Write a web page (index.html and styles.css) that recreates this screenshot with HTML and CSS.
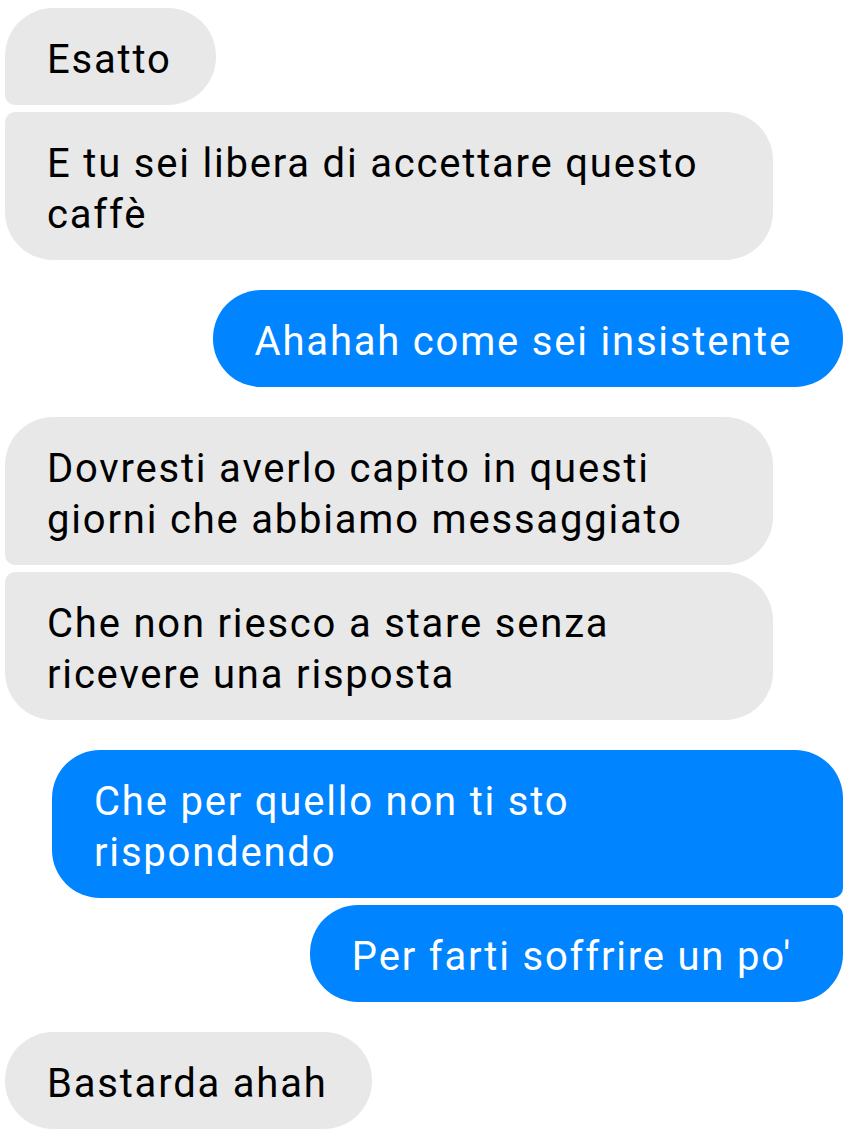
FILE: index.html
```html
<!DOCTYPE html>
<html lang="it">
<head>
<meta charset="utf-8">
<title>Chat</title>
<link rel="stylesheet" href="styles.css">
</head>
<body>
<div class="chat">
  <div class="group in">
    <div class="bubble first">Esatto</div>
    <div class="bubble last">E tu sei libera di accettare questo caffè</div>
  </div>
  <div class="group out">
    <div class="bubble">Ahahah come sei insistente</div>
  </div>
  <div class="group in">
    <div class="bubble first">Dovresti averlo capito in questi giorni che abbiamo messaggiato</div>
    <div class="bubble last">Che non riesco a stare senza ricevere una risposta</div>
  </div>
  <div class="group out">
    <div class="bubble first">Che per quello non ti sto rispondendo</div>
    <div class="bubble last">Per farti soffrire un po'</div>
  </div>
  <div class="group in">
    <div class="bubble">Bastarda ahah</div>
  </div>
</div>
</body>
</html>
```

FILE: styles.css
```css
html, body {
  margin: 0;
  padding: 0;
  background: #ffffff;
}

.chat {
  display: flex;
  flex-direction: column;
  gap: 30px;
  padding: 8px 16px 0 5px;
  font-family: Roboto, "Noto Sans", sans-serif;
  font-size: 40px;
  line-height: 51px;
  letter-spacing: 1.8px;
}

.group {
  display: flex;
  flex-direction: column;
  gap: 7px;
}

.group.in {
  align-items: flex-start;
}

.group.out {
  align-items: flex-end;
}

.bubble {
  box-sizing: border-box;
  padding: 26px 44px 20px 42px;
  border-radius: 48px;
  max-width: 768px;
}

.in .bubble {
  background: #e8e8e8;
  color: #000000;
}

.out .bubble {
  background: #0084ff;
  color: #ffffff;
  max-width: 791px;
  padding: 26px 51px 20px 42px;
}

.in .bubble.first {
  border-bottom-left-radius: 10px;
}

.in .bubble.last {
  border-top-left-radius: 10px;
}

.out .bubble.first {
  border-bottom-right-radius: 10px;
}

.out .bubble.last {
  border-top-right-radius: 10px;
}
```
